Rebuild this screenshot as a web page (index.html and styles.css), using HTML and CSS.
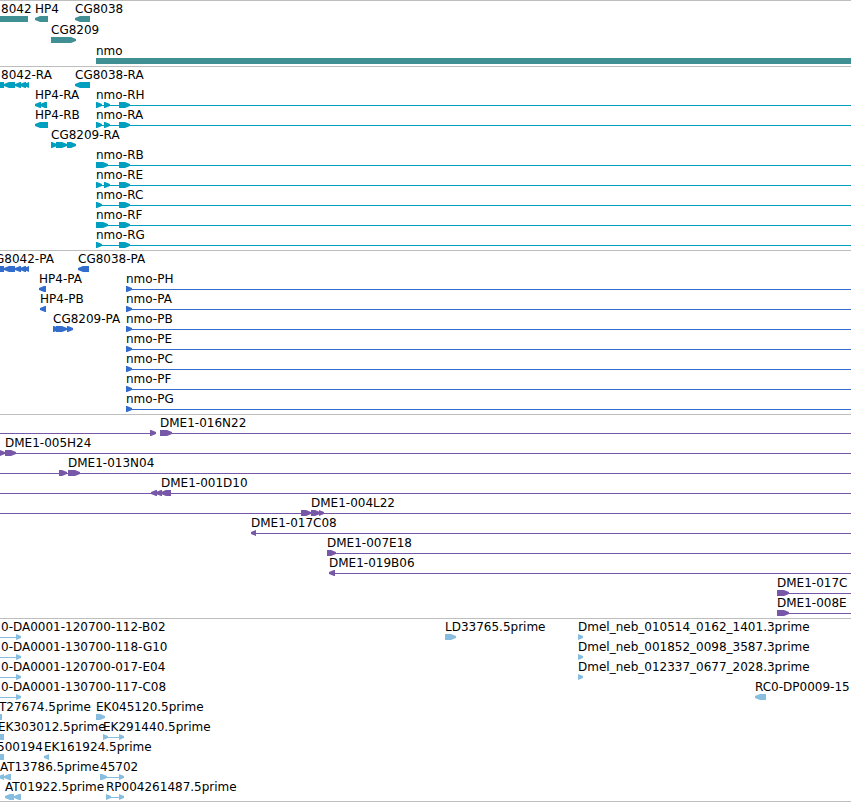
FILE: index.html
```html
<!DOCTYPE html>
<html lang="en">

<head>
    <meta charset="UTF-8">
    <meta name="viewport" content="width=device-width, initial-scale=1.0">
    <title>Genome tracks</title>
    <link rel="stylesheet" href="styles.css">
</head>

<body>
    <main id="tracks"></main>
    <script src="tracks.js"></script>
</body>

</html>
```
FILE: styles.css
```css
* {
    box-sizing: border-box;
}

body {
    margin: 0;
    background-color: white;
    color: black;
    font: 12px/12px "DejaVu Sans", sans-serif;
    overflow: hidden;
}

.track {
    border-top: 1px solid #bebebe;
    padding: 2px 0 1px;
}

.gene {
    color: #408f95;
    padding-bottom: 0;
}

.transcript {
    color: #009fbf;
}

.protein {
    color: #326dcd;
}

.bac {
    color: #7757a7;
}

.est {
    color: #87bddf;
    border-bottom: 1px solid #bebebe;
    padding-bottom: 0;
}

.lane {
    display: grid;
    grid-template-rows: 13px 6px;
    height: 20px;
}

.gene .lane {
    height: 21px;
}

.labels,
.glyphs {
    position: relative;
}

/* features sit at their place on the sequence */
.label,
.line,
.box {
    position: absolute;
}

.label {
    color: black;
    white-space: nowrap;
}

.line {
    top: 3px;
    height: 1px;
    background-color: currentColor;
}

.box {
    height: 6px;
    background-color: currentColor;
}

.right {
    clip-path: polygon(0 0, calc(100% - 5px) 0, 100% 33%, 100% 67%, calc(100% - 5px) 100%, 0 100%);
}

.left {
    clip-path: polygon(100% 0, 5px 0, 0 33%, 0 67%, 5px 100%, 100% 100%);
}
```
FILE: tracks.js
```js
// lane: labels [x, text], boxes [x, width, direction], lines [from, to]
// a line with no end runs on past the right edge
const nmo = [119, 11, 'right'];
const small = [[96, 6, 'right'], [104, 6, 'right'], nmo];

const tracks = [
    {
        type: 'gene',
        lanes: [
            { labels: [[1, '8042'], [35, 'HP4'], [75, 'CG8038']], boxes: [[0, 28], [35, 13, 'left'], [75, 15, 'left']] },
            { labels: [[51, 'CG8209']], boxes: [[51, 25, 'right']] },
            { labels: [[96, 'nmo']], boxes: [[96]] }
        ]
    },
    {
        type: 'transcript',
        lanes: [
            { labels: [[1, '8042-RA'], [75, 'CG8038-RA']], boxes: [[0, 4], [4, 11, 'left'], [15, 6, 'left'], [20, 6, 'left'], [24, 5, 'left'], [75, 15, 'left']] },
            { labels: [[35, 'HP4-RA'], [96, 'nmo-RH']], boxes: [[35, 6, 'left'], [40, 7, 'left'], ...small], lines: [[96]] },
            { labels: [[35, 'HP4-RB'], [96, 'nmo-RA']], boxes: [[35, 13, 'left'], ...small], lines: [[96]] },
            { labels: [[51, 'CG8209-RA']], boxes: [[51, 6, 'right'], [56, 11, 'right'], [67, 9, 'right']] },
            { labels: [[96, 'nmo-RB']], boxes: [[96, 12, 'right'], nmo], lines: [[96]] },
            { labels: [[96, 'nmo-RE']], boxes: small, lines: [[96]] },
            { labels: [[96, 'nmo-RC']], boxes: [[96, 6, 'right'], nmo], lines: [[96]] },
            { labels: [[96, 'nmo-RF']], boxes: [[96, 12, 'right'], nmo], lines: [[96]] },
            { labels: [[96, 'nmo-RG']], boxes: [[96, 6, 'right'], nmo], lines: [[96]] }
        ]
    },
    {
        type: 'protein',
        lanes: [
            { labels: [[-5, 'G8042-PA'], [78, 'CG8038-PA']], boxes: [[0, 4], [4, 11, 'left'], [15, 6, 'left'], [20, 6, 'left'], [24, 5, 'left'], [78, 11, 'left']] },
            { labels: [[39, 'HP4-PA'], [126, 'nmo-PH']], boxes: [[39, 7, 'left'], [126, 6, 'right']], lines: [[126]] },
            { labels: [[40, 'HP4-PB'], [126, 'nmo-PA']], boxes: [[40, 6, 'left'], [126, 6, 'right']], lines: [[126]] },
            { labels: [[53, 'CG8209-PA'], [126, 'nmo-PB']], boxes: [[53, 6, 'right'], [56, 11, 'right'], [67, 6, 'right'], [126, 6, 'right']], lines: [[126]] },
            { labels: [[126, 'nmo-PE']], boxes: [[126, 6, 'right']], lines: [[126]] },
            { labels: [[126, 'nmo-PC']], boxes: [[126, 6, 'right']], lines: [[126]] },
            { labels: [[126, 'nmo-PF']], boxes: [[126, 6, 'right']], lines: [[126]] },
            { labels: [[126, 'nmo-PG']], boxes: [[126, 6, 'right']], lines: [[126]] }
        ]
    },
    {
        type: 'bac',
        lanes: [
            { labels: [[160, 'DME1-016N22']], boxes: [[150, 6, 'right'], [160, 12, 'right']], lines: [[0, 156], [160]] },
            { labels: [[5, 'DME1-005H24']], boxes: [[-1, 6, 'right'], [5, 11, 'right']], lines: [[0]] },
            { labels: [[68, 'DME1-013N04']], boxes: [[59, 8, 'right'], [68, 12, 'right']], lines: [[0]] },
            { labels: [[161, 'DME1-001D10']], boxes: [[151, 6, 'left'], [156, 6, 'left'], [161, 10, 'left']], lines: [[0]] },
            { labels: [[311, 'DME1-004L22']], boxes: [[301, 10, 'right'], [311, 9, 'right'], [319, 5, 'right']], lines: [[0]] },
            { labels: [[251, 'DME1-017C08']], boxes: [[251, 5, 'left']], lines: [[251]] },
            { labels: [[327, 'DME1-007E18']], boxes: [[327, 9, 'right']], lines: [[327]] },
            { labels: [[329, 'DME1-019B06']], boxes: [[329, 6, 'left']], lines: [[329]] },
            { labels: [[777, 'DME1-017C']], boxes: [[777, 12, 'right']], lines: [[777]] },
            { labels: [[777, 'DME1-008E']], boxes: [[777, 12, 'right']], lines: [[777]] }
        ]
    },
    {
        type: 'est',
        lanes: [
            { labels: [[1, '0-DA0001-120700-112-B02'], [445, 'LD33765.5prime'], [578, 'Dmel_neb_010514_0162_1401.3prime']], boxes: [[16, 5, 'right'], [445, 11, 'right'], [578, 5, 'right']], lines: [[0, 18]] },
            { labels: [[1, '0-DA0001-130700-118-G10'], [578, 'Dmel_neb_001852_0098_3587.3prime']], boxes: [[16, 5, 'right'], [578, 5, 'right']], lines: [[0, 18]] },
            { labels: [[1, '0-DA0001-120700-017-E04'], [578, 'Dmel_neb_012337_0677_2028.3prime']], boxes: [[16, 5, 'right'], [578, 5, 'right']], lines: [[0, 18]] },
            { labels: [[1, '0-DA0001-130700-117-C08'], [755, 'RC0-DP0009-15']], boxes: [[16, 5, 'right'], [755, 11, 'left']], lines: [[0, 18]] },
            { labels: [[-1, 'T27674.5prime'], [96, 'EK045120.5prime']], boxes: [[0, 2], [96, 9, 'right']] },
            { labels: [[-2, 'EK303012.5prime'], [103, 'EK291440.5prime']], boxes: [[0, 4], [103, 5, 'right'], [119, 5, 'right']], lines: [[103, 121]] },
            { labels: [[-3, '500194'], [44, 'EK161924.5prime']], boxes: [[0, 4], [44, 5, 'left']] },
            { labels: [[0, 'AT13786.5prime'], [100, '45702']], boxes: [[-1, 5, 'left'], [4, 7, 'left'], [100, 7, 'right'], [119, 5, 'right']], lines: [[100, 121]] },
            { labels: [[5, 'AT01922.5prime'], [106, 'RP004261487.5prime']], boxes: [[5, 9, 'left'], [14, 7, 'left'], [106, 5, 'right'], [119, 5, 'right']], lines: [[106, 121]] }
        ]
    }
];

function addElement(parent, tag, className) {
    const element = document.createElement(tag);
    element.className = className;
    parent.appendChild(element);
    return element;
}

function place(element, start, width) {
    element.style.left = start + 'px';
    if (width === undefined) {
        element.style.right = '0';
    } else {
        element.style.width = width + 'px';
    }
}

tracks.forEach((track) => {
    const section = addElement(document.getElementById('tracks'), 'section', 'track ' + track.type);

    track.lanes.forEach((data) => {
        const lane = addElement(section, 'div', 'lane');
        const labels = addElement(lane, 'div', 'labels');
        const glyphs = addElement(lane, 'div', 'glyphs');

        data.labels.forEach(([x, text]) => {
            const label = addElement(labels, 'span', 'label');
            label.textContent = text;
            label.style.left = x + 'px';
        });
        (data.lines || []).forEach(([from, to]) => {
            place(addElement(glyphs, 'span', 'line'), from, to === undefined ? undefined : to - from);
        });
        data.boxes.forEach(([x, width, direction]) => {
            place(addElement(glyphs, 'span', 'box ' + (direction || '')), x, width);
        });
    });
});
```
